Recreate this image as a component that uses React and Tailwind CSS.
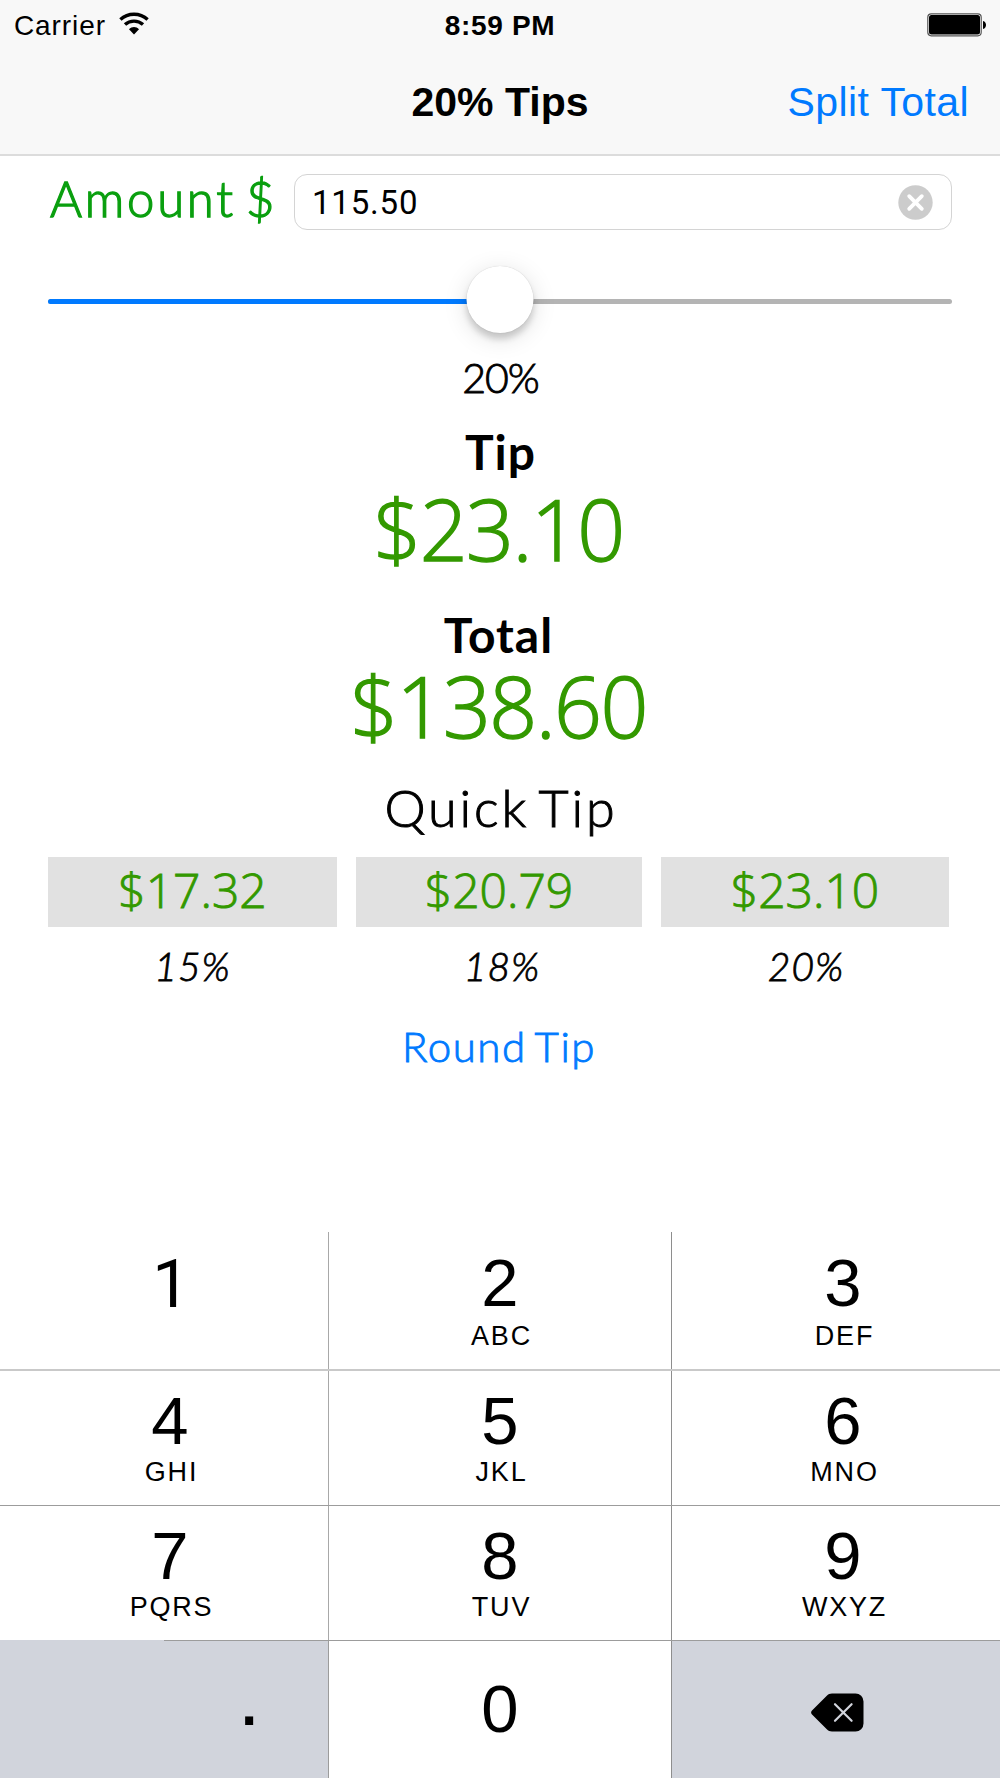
import React, { useState } from 'react';
import clsx from 'clsx';

const QUICK_TIPS = [
  { label: '15%', amount: '$17.32', value: 15 },
  { label: '18%', amount: '$20.79', value: 18 },
  { label: '20%', amount: '$23.10', value: 20 },
];

const KEY_ROWS = [
  [['1', ''], ['2', 'ABC'], ['3', 'DEF']],
  [['4', 'GHI'], ['5', 'JKL'], ['6', 'MNO']],
  [['7', 'PQRS'], ['8', 'TUV'], ['9', 'WXYZ']],
];

const StatusBar = () => (
  <div className="grid h-[52px] grid-cols-3 text-[28px] leading-[52px]">
    <div className="flex items-start pl-[14px]">
      <span className="tracking-[0.9px]">Carrier</span>
      <svg className="ml-[13px] mt-[12px]" width="30" height="24" viewBox="0 0 30 24" fill="none" stroke="#000">
        <path d="M1.4 7.4C9 .5 21 .5 28.6 7.4" strokeWidth="3.4" />
        <path d="M6 12.6c5-4.6 13-4.6 18 0" strokeWidth="3.4" />
        <path d="M15 22.4l-5-5.2c2.9-2.8 7.1-2.8 10 0z" fill="#000" stroke="none" />
      </svg>
    </div>
    <div className="text-center font-bold tracking-[0.7px]">8:59 PM</div>
    <div className="flex items-start justify-end pr-[13px]">
      <svg className="mt-[13px]" width="60" height="24" viewBox="0 0 60 24">
        <rect x="0.8" y="0.8" width="53.4" height="22" rx="3.5" fill="#fff" stroke="#555" strokeWidth="1.2" />
        <rect x="2" y="2" width="51" height="19.6" rx="2.5" fill="#000" />
        <path d="M56 8c4 1 4 7 0 8z" fill="#000" />
      </svg>
    </div>
  </div>
);

const Header = () => (
  <header className="h-[156px] border-b-2 border-[#dcdcdc] bg-[#f8f8f8]">
    <StatusBar />
    <div className="grid h-[102px] grid-cols-[1fr_auto_1fr] items-start text-[41px] leading-[100px]">
      <span />
      <h1 className="font-bold">20% Tips</h1>
      <button className="justify-self-end pr-[31px] tracking-[0.4px] text-[#007aff]">Split Total</button>
    </div>
  </header>
);

const Slider = ({ percent }) => (
  <div className="relative mx-12 mt-[37px] h-[67px]">
    <div className="absolute inset-x-0 top-[33px] h-[5px] rounded-full bg-[#b4b4b4]" />
    <div className="absolute left-0 top-[33px] h-[5px] rounded-full bg-[#007aff]" style={{ width: `${percent}%` }} />
    <div
      className="absolute top-0 size-[67px] -translate-x-1/2 rounded-full bg-white shadow-[0_0_1px_rgba(0,0,0,0.2),0_6px_6px_rgba(0,0,0,0.16),0_5px_24px_rgba(0,0,0,0.13)]"
      style={{ left: `${percent}%` }}
    />
  </div>
);

const Keypad = () => (
  <div className="mt-auto bg-white">
    {KEY_ROWS.map((row, r) => (
      <div
        key={r}
        className={clsx(
          'grid grid-cols-[329px_343px_328px]',
          r === 0 && 'h-[139px] border-b-2 border-[#c9c9c9]',
          r === 1 && 'h-[135px] border-b border-[#9c9c9c]',
          r === 2 && 'h-[135px]'
        )}
      >
        {row.map(([digit, letters], c) => (
          <button
            key={digit}
            className={clsx(
              'flex flex-col items-center',
              c === 0 && 'border-r border-[#a8a8a8] pl-3',
              c === 1 && 'border-r border-[#8e8e8e]',
              c === 2 && 'pl-[14px]',
              r === 0 && 'pt-px'
            )}
          >
            <span
              className={clsx(
                'text-[67px]',
                digit === '1' ? "pl-[2px] font-['Roboto',sans-serif] leading-[102px]" : 'leading-[99px]'
              )}
            >
              {digit}
            </span>
            {letters && (
              <span
                className={clsx(
                  'pl-[3px] text-[27px] leading-[28px] tracking-[1.8px]',
                  r === 0 ? '-mt-[10px]' : '-mt-[12px]'
                )}
              >
                {letters}
              </span>
            )}
          </button>
        ))}
      </div>
    ))}
    {/* The rule above the bottom row only starts halfway through the first key */}
    <div className="-mt-px flex h-px">
      <div className="w-[164px] bg-[#d1d4dc]" />
      <div className="flex-1 bg-[#9c9c9c]" />
    </div>
    <div className="grid h-[137px] grid-cols-[329px_343px_328px]">
      <button className="flex items-start justify-end border-r border-[#9c9c9c] bg-[#d1d4dc] pr-[71px] text-[57px] font-bold leading-[128px]">
        .
      </button>
      <button className="flex items-start justify-center border-r border-[#8e8e8e] text-[67px] leading-[135px]">0</button>
      <button className="flex items-start bg-[#d1d4dc] pl-[139px] pt-[52px]">
        <svg width="53" height="39" viewBox="0 0 53 39">
          <path d="M21 .5h23.500a8 8 0 0 1 8 8v22a8 8 0 0 1-8 8H21c-2.200 0-3.800-.8-5.200-2.200L1 21.600c-1.200-1.300-1.200-2.900 0-4.200L15.800 2.700C17.200 1.300 18.800.5 21 .5z" fill="#000" />
          <path d="M24 11.200l16.600 16.600M40.600 11.200L24 27.800" stroke="#d1d4dc" strokeWidth="2.200" strokeLinecap="round" />
        </svg>
      </button>
    </div>
  </div>
);

const App = () => {
  const [amount, setAmount] = useState('115.50');

  return (
    <div className="flex h-[1778px] w-[1000px] flex-col overflow-hidden bg-white font-['Liberation_Sans',Arial,sans-serif] text-black">
      <Header />

      <main className="font-['Lato',sans-serif] font-light">
        <div className="flex items-start pl-[50px] pr-12 pt-[18px]">
          <label className="w-[244px] whitespace-nowrap text-[49px] leading-[48px] tracking-[2.8px] text-[#0a9f0f] [-webkit-text-stroke:1.3px] [word-spacing:-6px]">
            Amount $
          </label>
          <div className="flex h-[56px] flex-1 items-center rounded-[13px] border border-[#d4d4d4] pl-[17px] pr-[18px]">
            <input
              className="h-[53px] min-w-0 flex-1 font-['Roboto',sans-serif] text-[33px] font-normal tracking-[0.8px] outline-none"
              value={amount}
              onChange={(e) => setAmount(e.target.value)}
            />
            <button onClick={() => setAmount('')}>
              <svg width="35" height="35" viewBox="0 0 35 35">
                <circle cx="17.500" cy="17.500" r="17.200" fill="#ccc" />
                <path d="M11.200 11.200l12.600 12.600M23.800 11.200L11.200 23.800" stroke="#fff" strokeWidth="3.800" strokeLinecap="round" />
              </svg>
            </button>
          </div>
        </div>

        <div className="-mt-px">
          <Slider percent={50} />
        </div>

        <div className="text-center">
          <p className="pl-px pt-px text-[41px] leading-[88px] tracking-[-1px] [-webkit-text-stroke:0.9px]">20%</p>
          <h2 className="pl-px text-[48px] font-bold leading-[59px] tracking-[1px]">Tip</h2>
          <p className="pr-[3px] font-['Open_Sans',sans-serif] text-[84px] leading-[95px] tracking-[-1.6px] text-[#339900] [-webkit-text-stroke:1.4px]">
            $23.10
          </p>
          <h2 className="mt-[18px] pr-[3px] text-[48px] font-bold leading-[82px] tracking-[1px]">Total</h2>
          <p className="pr-[3px] font-['Open_Sans',sans-serif] text-[84px] leading-[60px] tracking-[-1.6px] text-[#339900] [-webkit-text-stroke:1.4px]">
            $138.60
          </p>
          <h3 className="mt-[22px] pl-[2px] text-[52px] leading-[99px] tracking-[2.9px] [-webkit-text-stroke:1px] [word-spacing:-6px]">
            Quick Tip
          </h3>
        </div>

        <div className="grid grid-cols-[289px_286px_288px] gap-x-[19px] pl-12 text-center">
          {QUICK_TIPS.map((tip) => (
            <div key={tip.value}>
              <button className="block h-[70px] w-full bg-[#e1e1e1] pb-[5px] font-['Open_Sans',sans-serif] text-[48px] leading-[65px] text-[#339900] [-webkit-text-stroke:0.9px]">
                {tip.amount}
              </button>
              <p
                className={clsx(
                  'pt-px text-[39px] italic leading-[76px] tracking-[1px] [-webkit-text-stroke:0.8px]',
                  tip.value === 18 && 'pl-[6px]',
                  tip.value === 20 && 'pl-[2px]'
                )}
              >
                {tip.label}
              </p>
            </div>
          ))}
        </div>

        <button className="block w-full pr-[2px] pt-px text-center text-[42px] leading-[83px] tracking-[1.6px] text-[#007aff] [-webkit-text-stroke:0.9px] [word-spacing:-4px]">
          Round Tip
        </button>
      </main>

      <Keypad />
    </div>
  );
};

export default App;
